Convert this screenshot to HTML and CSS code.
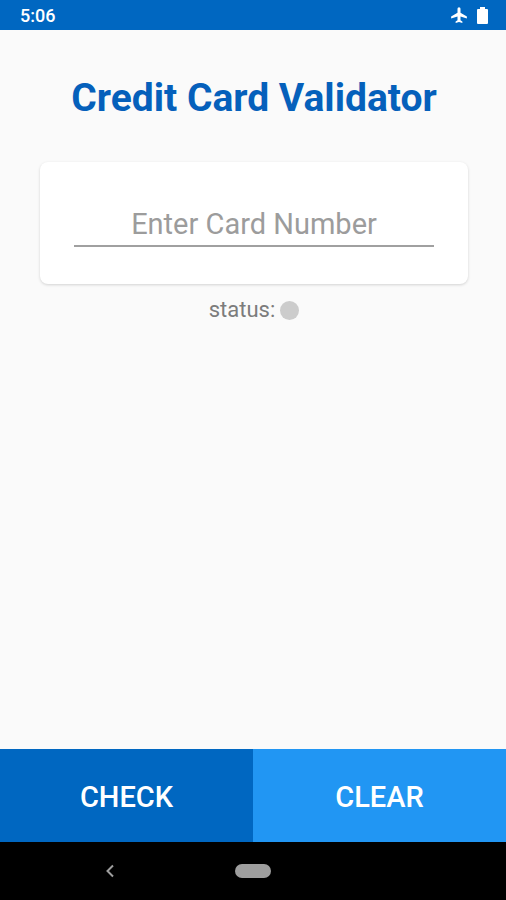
FILE: index.html
```html
<!DOCTYPE html>
<html lang="en">
<head>
<meta charset="utf-8">
<meta name="viewport" content="width=device-width, initial-scale=1">
<title>Credit Card Validator</title>
<link rel="stylesheet" href="styles.css">
</head>
<body>
<header class="status-bar">
  <time class="clock">5:06</time>
  <div class="status-icons">
    <svg width="18" height="18" viewBox="0 0 24 24" aria-hidden="true"><path fill="currentColor" d="M10 9V3.500a2 2 0 0 1 4 0V9L22.500 14v2.500L14 14v5l2.500 1.600V22.500L12 21.300l-4.500 1.200v-1.900L10 19v-5l-8.500 2.500V14z"/></svg>
    <svg width="11" height="17" viewBox="0 0 11 17" aria-hidden="true"><path fill="currentColor" d="M3 0h5v2h2a1 1 0 0 1 1 1v13a1 1 0 0 1-1 1H1a1 1 0 0 1-1-1V3a1 1 0 0 1 1-1h2z"/></svg>
  </div>
</header>
<main class="content">
  <h1 class="title">Credit Card Validator</h1>
  <section class="card">
    <input class="card-input" type="text" inputmode="numeric" placeholder="Enter Card Number" aria-label="Card number">
  </section>
  <p class="status">status: <span class="dot"></span></p>
</main>
<div class="actions">
  <button class="action check" type="button">CHECK</button>
  <button class="action clear" type="button">CLEAR</button>
</div>
<nav class="nav-bar" aria-label="System">
  <button class="nav-button" type="button" aria-label="Back"><svg width="10" height="14" viewBox="0 0 10 14" aria-hidden="true"><path d="M8 1.500 2.500 7 8 12.500" fill="none" stroke="currentColor" stroke-width="2"/></svg></button>
  <button class="nav-button" type="button" aria-label="Home"><span class="pill"></span></button>
</nav>
</body>
</html>
```
FILE: styles.css
```css
* { box-sizing: border-box; }
body {
  margin: 0;
  min-height: 100vh;
  display: flex;
  flex-direction: column;
  background: #fafafa;
  font-family: Roboto, "Liberation Sans", sans-serif;
}
.status-bar {
  height: 30px;
  padding: 0 18px 0 20px;
  display: flex;
  align-items: center;
  justify-content: space-between;
  background: #0067c1;
  color: #fff;
}
.clock { font-size: 18px; font-weight: 500; }
.status-icons { display: flex; align-items: center; gap: 9px; }
.content { flex: 1; padding: 44px 38px 0 40px; }
.title {
  margin: 0 0 40px;
  font-size: 39px;
  line-height: 48px;
  font-weight: 700;
  text-align: center;
  white-space: nowrap;
  color: #0560bb;
}
.card {
  padding: 40px 34px 37px;
  border-radius: 8px;
  background: #fff;
  box-shadow: 0 1px 3px rgba(0, 0, 0, 0.16);
}
.card-input {
  display: block;
  width: 100%;
  height: 45px;
  padding: 0;
  border: 0;
  border-bottom: 2px solid #a0a0a0;
  outline: 0;
  background: none;
  font: 400 29px Roboto, sans-serif;
  text-align: center;
  color: #333;
}
.card-input::placeholder { color: #9c9c9c; opacity: 1; }
.status {
  margin: 12px 0 0;
  display: flex;
  align-items: center;
  justify-content: center;
  gap: 5px;
  font-size: 22px;
  line-height: 28px;
  color: #7c7c7c;
}
.dot { width: 19px; height: 19px; border-radius: 50%; background: #ccc; }
.actions { display: grid; grid-template-columns: 1fr 1fr; }
.action {
  height: 93px;
  padding: 2px 0 0;
  border: 0;
  font: 500 29px Roboto, sans-serif;
  color: #fff;
}
.check { background: #0067c1; }
.clear { background: #2196f3; }
.nav-bar {
  height: 58px;
  padding: 0 70px;
  display: grid;
  grid-template-columns: 80px 1fr 80px;
  align-items: center;
  background: #000;
}
.nav-button {
  padding: 0;
  border: 0;
  display: flex;
  justify-content: center;
  background: none;
  color: #9e9e9e;
}
.pill { width: 36px; height: 14px; border-radius: 7px; background: #9e9e9e; }
```
